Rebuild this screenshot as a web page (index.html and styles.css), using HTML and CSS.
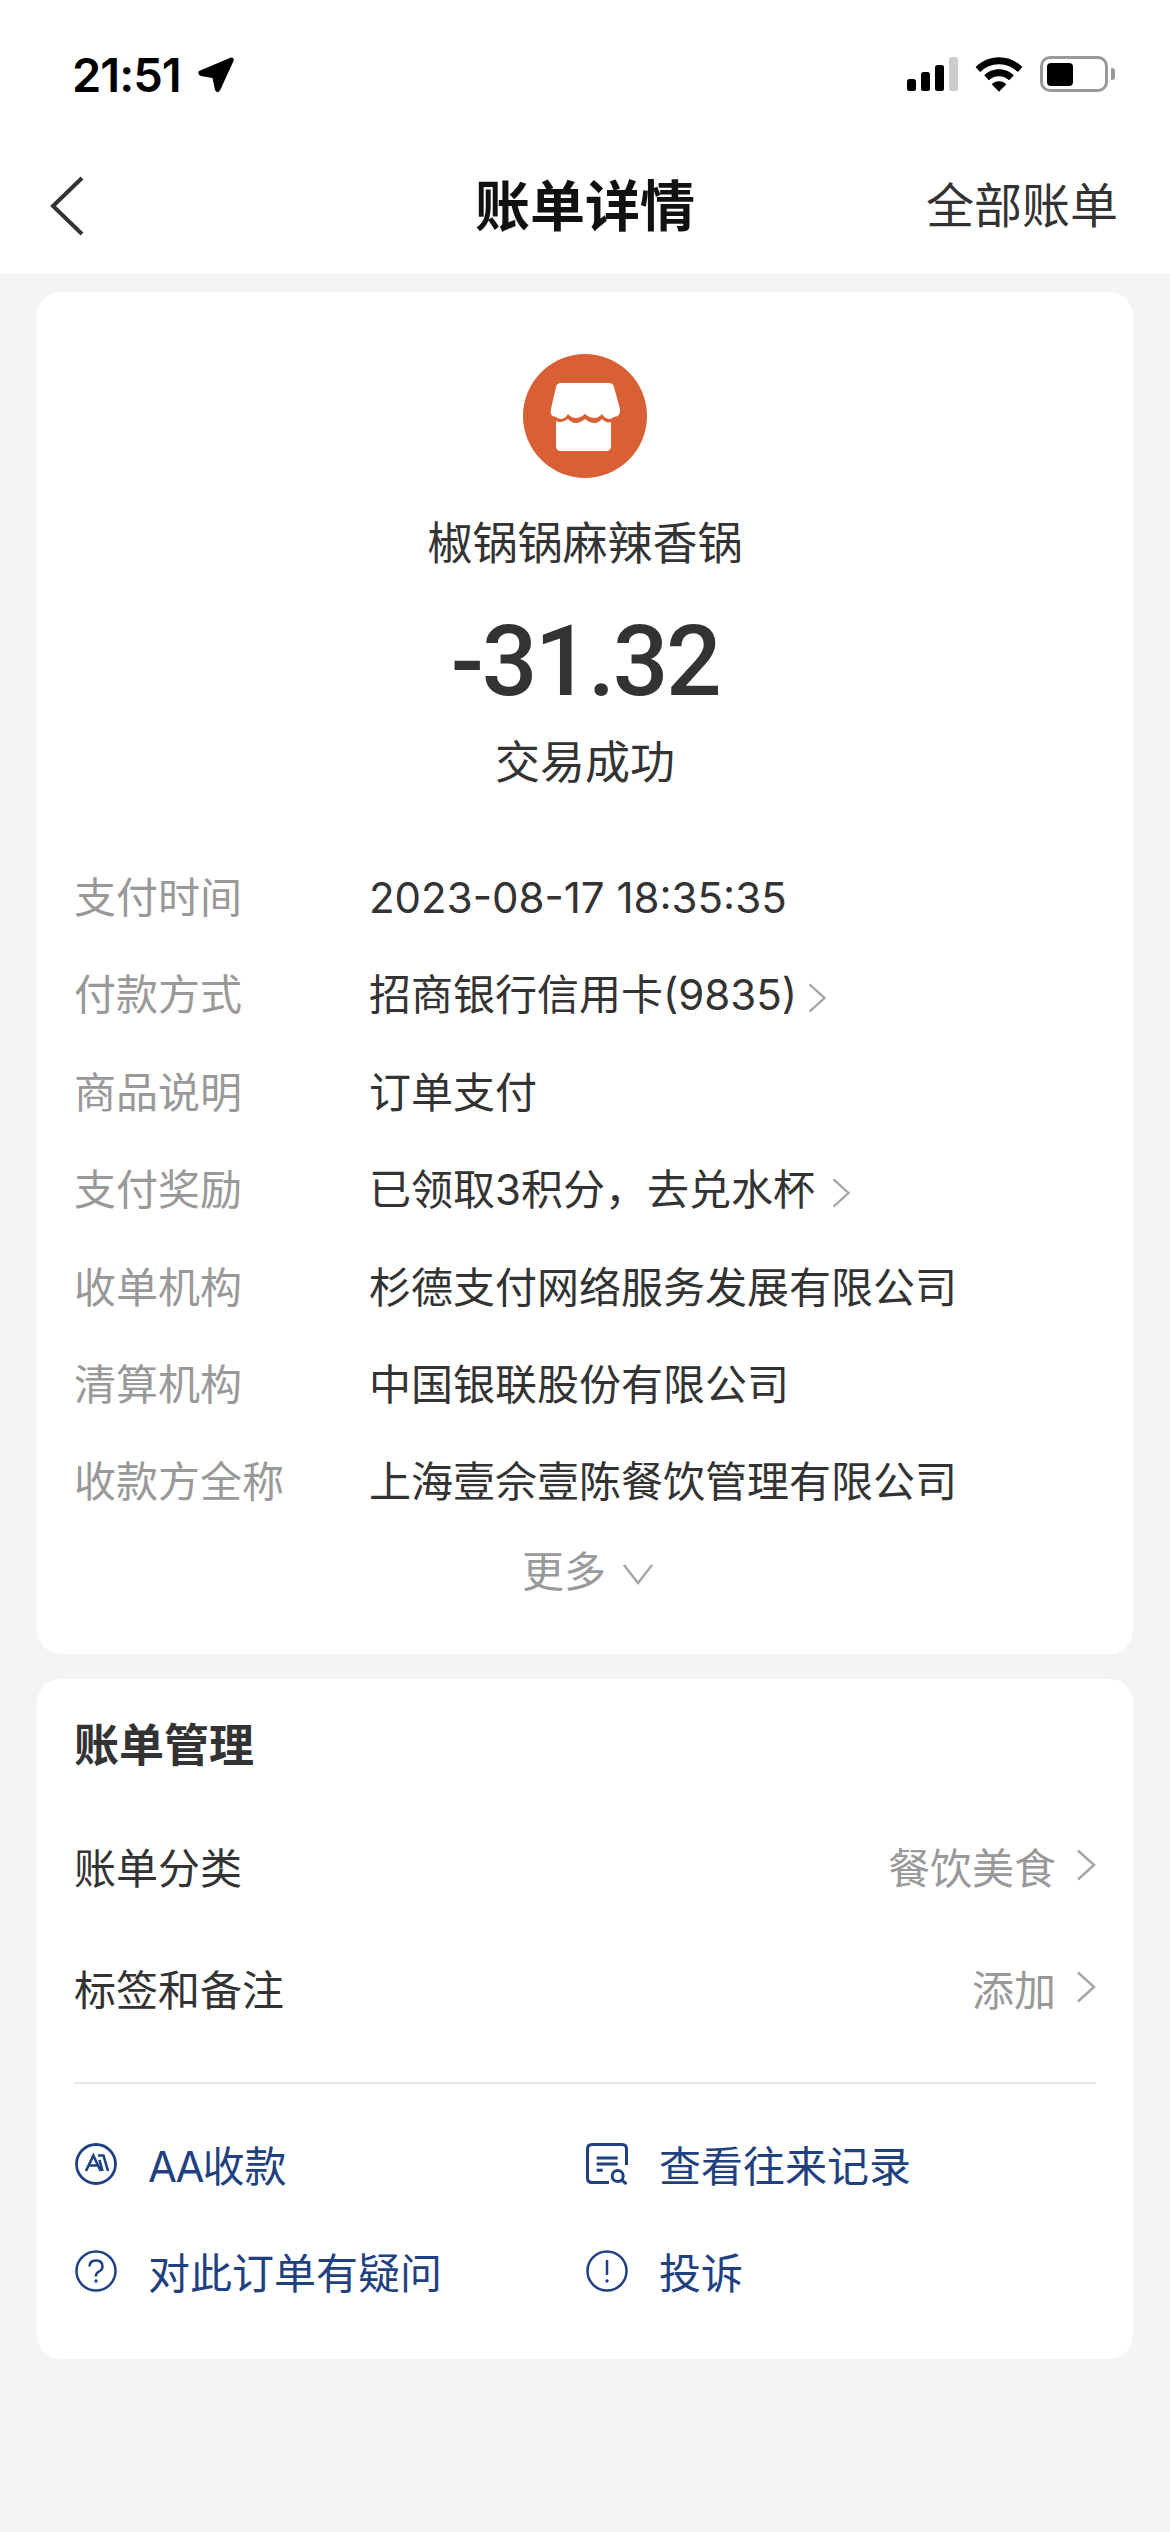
FILE: index.html
```html
<!DOCTYPE html>
<html lang="zh-CN">
<head>
<meta charset="utf-8">
<title>账单详情</title>
<link rel="stylesheet" href="styles.css">
</head>
<body>
<div class="top">
  <div class="status">
    <div class="time-wrap">
      <span class="time">21:51</span>
      <svg class="loc" width="37" height="37" viewBox="0 0 37 37"><path d="M33 .5Q36.500 .5 35.500 4L22 33.500Q19 37 17 33L14.500 21 3 19Q-1 17 1 14Z" fill="#000"/></svg>
    </div>
    <div class="sys">
      <svg width="51" height="34" viewBox="0 0 51 34"><rect x="0" y="22" width="9" height="12" rx="2.500" fill="#000"/><rect x="14" y="15" width="9" height="19" rx="2.500" fill="#000"/><rect x="28" y="8" width="9" height="26" rx="2.500" fill="#000"/><rect x="42" y="0" width="9" height="34" rx="2.500" fill="#ccc"/></svg>
      <svg width="48" height="35" viewBox="0 0 50 36"><path d="M25 0C15.500 0 7 3.800 .6 10.200l4.700 5.200C10.500 10.300 17.400 7.200 25 7.200s14.500 3.100 19.700 8.200l4.700-5.200C43 3.800 34.500 0 25 0z" fill="#000"/><path d="M25 12.500c-6 0-11.400 2.400-15.400 6.300l4.800 5.200c2.700-2.700 6.500-4.300 10.600-4.300s7.900 1.600 10.600 4.300l4.800-5.200c-4-3.900-9.400-6.300-15.400-6.300z" fill="#000"/><path d="M25 25c-3 0-5.700 1.200-7.600 3.100L25 36l7.600-7.900C30.700 26.200 28 25 25 25z" fill="#000"/></svg>
      <div class="battery"><div class="battery-level"></div></div>
      <div class="battery-tip"></div>
    </div>
  </div>
  <div class="nav">
    <svg class="back" width="36" height="60" viewBox="0 0 36 60"><path d="M32 2L3 30 32 58" fill="none" stroke="#333" stroke-width="4"/></svg>
    <h1 class="title">账单详情</h1>
    <span class="all">全部账单</span>
  </div>
</div>
<main class="page">
  <section class="card summary">
    <svg class="shop" width="124" height="124" viewBox="0 0 124 124"><circle cx="62" cy="62" r="62" fill="#d96034"/><path d="M38 29H86Q90 29 91 33L97 55Q98 62 91 63Q84 68 79 60Q72 68 62 60Q52 68 45 60Q40 68 33 63Q26 62 28 55L33 33Q34 29 38 29Z" fill="#fff"/><path d="M33 67Q38 70 45 65Q52 73 62 65Q72 73 79 65Q84 70 88 68V92Q88 97 83 97H38Q33 97 33 92Z" fill="#fff"/></svg>
    <div class="merchant">椒锅锅麻辣香锅</div>
    <div class="amount">-31.32</div>
    <div class="state">交易成功</div>
    <dl class="details">
      <div class="row"><dt>支付时间</dt><dd>2023-08-17 18:35:35</dd></div>
      <div class="row"><dt>付款方式</dt><dd>招商银行信用卡(9835)<svg class="chev near" width="20" height="30" viewBox="0 0 20 32"><path d="M2 1.500L18 16 2 30.500" fill="none" stroke="#a6a6a6" stroke-width="2.500"/></svg></dd></div>
      <div class="row"><dt>商品说明</dt><dd>订单支付</dd></div>
      <div class="row"><dt>支付奖励</dt><dd>已领取3积分，去兑水杯<svg class="chev mid" width="20" height="30" viewBox="0 0 20 32"><path d="M2 1.500L18 16 2 30.500" fill="none" stroke="#a6a6a6" stroke-width="2.500"/></svg></dd></div>
      <div class="row"><dt>收单机构</dt><dd>杉德支付网络服务发展有限公司</dd></div>
      <div class="row"><dt>清算机构</dt><dd>中国银联股份有限公司</dd></div>
      <div class="row"><dt>收款方全称</dt><dd>上海壹佘壹陈餐饮管理有限公司</dd></div>
    </dl>
    <div class="more">更多<svg class="more-chev" width="32" height="22" viewBox="0 0 32 22"><path d="M2 2L16 20 30 2" fill="none" stroke="#a6a6a6" stroke-width="2.500"/></svg></div>
  </section>
  <section class="card manage">
    <h2 class="manage-title">账单管理</h2>
    <div class="m-row"><span>账单分类</span><span class="m-val">餐饮美食<svg class="chev" width="20" height="32" viewBox="0 0 20 32"><path d="M2 1.500L18 16 2 30.500" fill="none" stroke="#a6a6a6" stroke-width="2.500"/></svg></span></div>
    <div class="m-row"><span>标签和备注</span><span class="m-val">添加<svg class="chev" width="20" height="32" viewBox="0 0 20 32"><path d="M2 1.500L18 16 2 30.500" fill="none" stroke="#a6a6a6" stroke-width="2.500"/></svg></span></div>
    <div class="links">
      <div class="link"><svg width="42" height="42" viewBox="0 0 42 42"><circle cx="21" cy="21" r="19.500" fill="none" stroke="#1f4180" stroke-width="2.800"/><path d="M11 28L18.300 12.500 25.700 28M13.500 22.500H23.500M23 12.500H28.500L33 28M24.500 17L27.500 28" fill="none" stroke="#1f4180" stroke-width="2.600"/></svg><span><span class="tight">AA</span>收款</span></div>
      <div class="link"><svg width="42" height="42" viewBox="0 0 42 42"><path d="M23 39.500H6Q1.500 39.500 1.500 35V6Q1.500 1.500 6 1.500H36Q40.500 1.500 40.500 6V22" fill="none" stroke="#1f4180" stroke-width="3"/><path d="M10.700 15H31.700M10.700 21H31.700M10.700 27.300H16.700" fill="none" stroke="#1f4180" stroke-width="3"/><circle cx="31.700" cy="33" r="5.500" fill="none" stroke="#1f4180" stroke-width="3"/><path d="M35.500 37L40.500 41" stroke="#1f4180" stroke-width="3"/></svg><span>查看往来记录</span></div>
      <div class="link"><svg width="42" height="42" viewBox="0 0 42 42"><circle cx="21" cy="21" r="19.500" fill="none" stroke="#1f4180" stroke-width="2.500"/><path d="M14.500 16.500Q14.500 10.500 21 10.500T27.500 16.500Q27.500 19.500 24 21.500T21 26.500" fill="none" stroke="#1f4180" stroke-width="2.500"/><circle cx="21" cy="31" r="1.700" fill="#1f4180"/></svg><span>对此订单有疑问</span></div>
      <div class="link"><svg width="42" height="42" viewBox="0 0 42 42"><circle cx="21" cy="21" r="19.500" fill="none" stroke="#1f4180" stroke-width="2.500"/><path d="M21 10V25" stroke="#1f4180" stroke-width="2.500"/><circle cx="21" cy="31" r="1.700" fill="#1f4180"/></svg><span>投诉</span></div>
    </div>
  </section>
</main>
</body>
</html>
```
FILE: styles.css
```css
* { box-sizing: border-box; margin: 0; padding: 0; }
html, body { height: 2532px; overflow: hidden; }
body {
  background: #f4f4f4;
  color: #333;
  font-family: "Inter", "Noto Sans CJK SC", sans-serif;
  font-size: 42px;
  font-weight: 400;
}
.top { background: #fff; height: 274px; }
.status {
  height: 131px;
  padding: 0 55px 0 72px;
  display: flex;
  justify-content: space-between;
  align-items: flex-start;
}
.time-wrap { display: flex; align-items: center; gap: 17px; padding-top: 50px; }
.time { font-size: 47px; font-weight: 600; color: #000; line-height: 50px; letter-spacing: -1px; }
.loc { display: block; }
.sys { display: flex; align-items: center; padding-top: 56px; gap: 17px; }
.sys svg { display: block; }
.battery {
  width: 68px; height: 36px;
  border: 3px solid #999;
  border-radius: 10px;
  padding: 3.500px;
}
.battery-level { width: 26px; height: 100%; background: #000; border-radius: 4px; }
.battery-tip { width: 4px; height: 12px; margin-left: -14px; background: #999; border-radius: 0 3px 3px 0; }
.nav {
  height: 143px;
  padding: 7px 52px 0 50px;
  display: flex;
  align-items: center;
  justify-content: space-between;
  position: relative;
}
.back { display: block; }
.title {
  font-size: 55px;
  font-weight: 700;
  color: #111;
  position: absolute;
  left: 0; right: 0;
  text-align: center;
  line-height: 60px;
}
.all { font-size: 48px; color: #333; position: relative; line-height: 60px; }
.page { padding: 18px 37px 0; display: flex; flex-direction: column; gap: 25px; }
.card { background: #fff; border-radius: 24px; }
.summary {
  height: 1362px;
  padding-top: 62px;
  display: flex;
  flex-direction: column;
  align-items: center;
}
.shop { display: block; }
.merchant { font-size: 45px; line-height: 60px; margin-top: 36px; }
.amount {
  font-family: "Roboto", sans-serif;
  font-size: 98px;
  font-weight: 500;
  letter-spacing: -2.500px;
  line-height: 110px;
  margin-top: 33px;
}
.state { font-size: 45px; line-height: 60px; margin-top: 16px; }
.details { width: 100%; padding: 0 37px; margin-top: 56px; }
.row { display: flex; height: 97.400px; align-items: baseline; line-height: 97.400px; }
.row dt { width: 295px; color: #999; flex: none; }
.chev { display: block; margin-left: 20px; }
.near, .mid { display: inline-block; vertical-align: -3px; }
.near { margin-left: 10px; }
.mid { margin-left: 16px; }
.more {
  display: flex;
  align-items: center;
  gap: 16px;
  color: #999;
  line-height: 60px;
  margin-top: 11px;
  padding-left: 6px;
}
.more-chev { margin-top: 4px; }
.manage { height: 680px; padding: 0 37px; }
.manage-title { font-size: 45px; font-weight: 700; line-height: 60px; padding-top: 37px; margin-bottom: 28px; height: 97px; }
.m-row { display: flex; justify-content: space-between; align-items: center; height: 122px; }
.m-val { display: flex; align-items: center; color: #999; }
.links {
  display: grid;
  grid-template-columns: 511px 1fr;
  grid-auto-rows: 107px;
  margin-top: 34px;
  padding: 26px 0 0 1px;
  border-top: 2px solid #e8e8e8;
  color: #1f4180;
}
.link { display: flex; align-items: center; gap: 31px; }
.link svg { display: block; flex: none; }
.tight { letter-spacing: -2px; }
```
